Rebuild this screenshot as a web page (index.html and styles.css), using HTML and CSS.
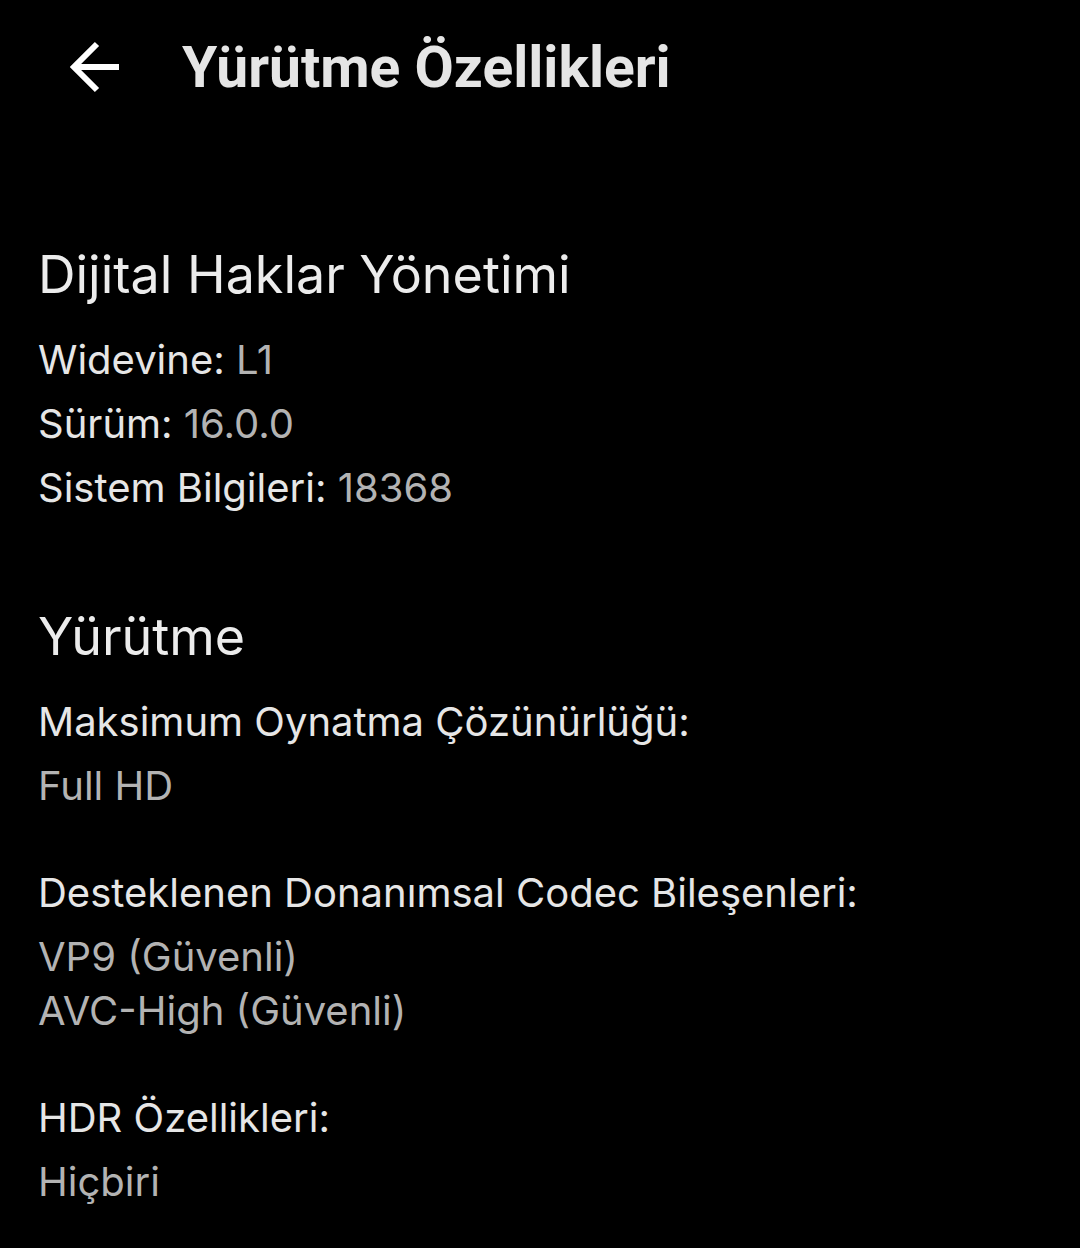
FILE: index.html
```html
<!DOCTYPE html>
<html lang="tr">
<head>
    <meta charset="UTF-8">
    <meta name="viewport" content="width=device-width, initial-scale=1.0">
    <title>Yürütme Özellikleri</title>
    <link rel="stylesheet" href="styles.css">
</head>
<body>
    <div class="screen">
        <div class="topbar">
            <a class="back" href="#" aria-label="Geri">
                <svg width="52" height="52" viewBox="0 0 52 52">
                    <path d="M50 26H5 M28 3L5 26L28 49" fill="none" stroke="#ffffff" stroke-width="6"/>
                </svg>
            </a>
            <h1>Yürütme Özellikleri</h1>
        </div>

        <div class="section">
            <h2>Dijital Haklar Yönetimi</h2>
            <p class="row">Widevine: <span class="value">L1</span></p>
            <p class="row">Sürüm: <span class="value">16.0.0</span></p>
            <p class="row">Sistem Bilgileri: <span class="value">18368</span></p>
        </div>

        <div class="section">
            <h2>Yürütme</h2>
            <div class="item">
                <p class="label">Maksimum Oynatma Çözünürlüğü:</p>
                <p class="value">Full HD</p>
            </div>
            <div class="item">
                <p class="label">Desteklenen Donanımsal Codec Bileşenleri:</p>
                <p class="value">VP9 (Güvenli)</p>
                <p class="value">AVC-High (Güvenli)</p>
            </div>
            <div class="item">
                <p class="label">HDR Özellikleri:</p>
                <p class="value">Hiçbiri</p>
            </div>
        </div>
    </div>
</body>
</html>
```

FILE: styles.css
```css
body {
    font-family: 'Inter', 'Roboto', sans-serif;
    margin: 0;
    padding: 0;
    background-color: #000000;
    color: #e6e6e6;
}

.screen {
    min-height: 100vh;
    padding: 0 38px;
}

.topbar {
    display: flex;
    align-items: center;
    height: 134px;
}

.back {
    display: flex;
    margin-left: 31px;
    margin-right: 61px;
}

.topbar h1 {
    font-family: 'Roboto', sans-serif;
    font-weight: 700;
    font-size: 57px;
    color: #e5e5e5;
    margin: 0;
}

.section {
    margin-top: 106px;
}

.section + .section {
    margin-top: 82px;
}

.section h2 {
    font-weight: 400;
    font-size: 52px;
    line-height: 70px;
    margin: 0 0 18px 0;
    color: #ececec;
}

.section + .section h2 {
    margin-bottom: 23px;
}

p {
    margin: 0;
    font-size: 40px;
}

.row {
    line-height: 64px;
}

.value {
    color: #b3b3b3;
}

.item {
    margin-bottom: 53px;
}

.item .label {
    line-height: 54px;
    margin-bottom: 10px;
}

.item .value {
    line-height: 54px;
}
```
